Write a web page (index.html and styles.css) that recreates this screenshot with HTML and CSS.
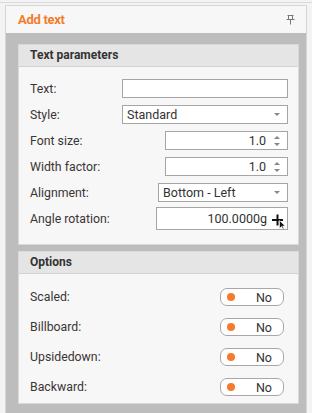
FILE: index.html
```html
<!DOCTYPE html>
<html lang="en">
<head>
    <meta charset="UTF-8">
    <title>Add text</title>
    <link rel="stylesheet" href="styles.css">
</head>
<body>
    <div class="frame">
        <div class="panel">
            <div class="panel__head">
                <span class="panel__title">Add text</span>
                <svg class="panel__pin" width="9" height="10" viewBox="0 0 9 10">
                    <path d="M1.5 0.5h6M2.5 0.5v4M6.5 0.5v4M0.5 4.5h8M4.5 4.5v5" stroke="#777" stroke-width="1" fill="none"/>
                </svg>
            </div>
            <div class="panel__body">
                <div class="group">
                    <div class="group__head">Text parameters</div>
                    <div class="group__body">
                        <div class="row">
                            <span class="row__label">Text:</span>
                            <div class="field field--text"></div>
                        </div>
                        <div class="row">
                            <span class="row__label">Style:</span>
                            <div class="field field--text field--select">
                                <span>Standard</span>
                                <span class="caret"></span>
                            </div>
                        </div>
                        <div class="row">
                            <span class="row__label">Font size:</span>
                            <div class="field field--num">
                                <span class="field__value">1.0</span>
                                <span class="spin"><i class="spin__up"></i><i class="spin__down"></i></span>
                            </div>
                        </div>
                        <div class="row">
                            <span class="row__label">Width factor:</span>
                            <div class="field field--num">
                                <span class="field__value">1.0</span>
                                <span class="spin"><i class="spin__up"></i><i class="spin__down"></i></span>
                            </div>
                        </div>
                        <div class="row">
                            <span class="row__label">Alignment:</span>
                            <div class="field field--align field--select">
                                <span>Bottom - Left</span>
                                <span class="caret"></span>
                            </div>
                        </div>
                        <div class="row">
                            <span class="row__label">Angle rotation:</span>
                            <div class="field field--angle">
                                <span class="field__value">100.0000g</span>
                                <svg class="cursor" width="16" height="16" viewBox="0 0 16 16">
                                    <path d="M1 7h11M6.5 1.5v11" stroke="#111" stroke-width="2" fill="none"/>
                                    <path d="M8.5 7.5v8l2-2 1.5 2.5 1-0.6-1.4-2.4h2.6z" fill="#111" stroke="#fff" stroke-width="0.6"/>
                                </svg>
                            </div>
                        </div>
                    </div>
                </div>
                <div class="group">
                    <div class="group__head">Options</div>
                    <div class="group__body group__body--options">
                        <div class="row row--opt">
                            <span class="row__label">Scaled:</span>
                            <div class="toggle"><span class="toggle__dot"></span>No</div>
                        </div>
                        <div class="row row--opt">
                            <span class="row__label">Billboard:</span>
                            <div class="toggle"><span class="toggle__dot"></span>No</div>
                        </div>
                        <div class="row row--opt">
                            <span class="row__label">Upsidedown:</span>
                            <div class="toggle"><span class="toggle__dot"></span>No</div>
                        </div>
                        <div class="row row--opt">
                            <span class="row__label">Backward:</span>
                            <div class="toggle"><span class="toggle__dot"></span>No</div>
                        </div>
                    </div>
                </div>
            </div>
        </div>
    </div>
</body>
</html>
```

FILE: styles.css
```css
* { box-sizing: border-box; }

html, body {
    margin: 0;
    padding: 0;
}

body {
    background: #f3f3f3;
    font-family: Roboto, "Liberation Sans", sans-serif;
    font-size: 12.3px;
    color: #3b3535;
    width: 312px;
    height: 413px;
    overflow: hidden;
}

.frame {
    margin-top: 2px;
    border-top: 1px solid #dadada;
    padding: 2px 5px 0 5px;
}

.panel {
    border: 1px solid #d6d6d6;
    border-bottom: none;
    background: #bdbdbd;
}

.panel__head {
    height: 27px;
    background: #f7f7f7;
    display: flex;
    align-items: center;
    justify-content: space-between;
    padding: 0 11px 0 12px;
}

.panel__title {
    color: #f47c2c;
    font-weight: bold;
    font-size: 13px;
    letter-spacing: -0.3px;
}

.panel__pin { margin-top: 1px; }

.panel__body {
    padding: 11px 7px 10px 12px;
    display: flex;
    flex-direction: column;
    gap: 6px;
}

.group {
    border: 1px solid #d9d9d9;
    background: #f7f7f7;
}

.group__head {
    height: 22px;
    background: #e5e5e5;
    border-bottom: 1px solid #d3d3d3;
    font-weight: bold;
    font-size: 12px;
    color: #333;
    padding: 3px 0 0 11px;
}

.group__body {
    padding: 12px 10px 16px 11px;
    display: flex;
    flex-direction: column;
    gap: 7px;
}

.group__body--options {
    padding: 14px 14px 7px 11px;
    gap: 12px;
}

.row {
    display: flex;
    align-items: center;
    justify-content: space-between;
    height: 19px;
}

.row--opt { height: 18px; }

.field {
    height: 19px;
    border: 1px solid #a5a5a5;
    background: #fff;
    display: flex;
    align-items: center;
    padding: 0 6px 0 4px;
    font-size: 12.5px;
    color: #333;
}

.field--text { width: 166px; }

.field--align { width: 130px; }

.field--select { justify-content: space-between; }

.field--num {
    width: 123px;
    justify-content: flex-end;
}

.field--angle {
    width: 132px;
    height: 23px;
    justify-content: flex-end;
    padding-right: 0;
}

.field__value { margin-right: 8px; }

.field--angle .field__value { margin-right: 4px; }

.cursor { margin-top: 4px; }

.caret {
    width: 0;
    height: 0;
    border-left: 3px solid transparent;
    border-right: 3px solid transparent;
    border-top: 3px solid #888;
    margin-right: 1px;
}

.spin {
    display: flex;
    flex-direction: column;
    gap: 4px;
    margin-right: 1px;
}

.spin i {
    display: block;
    width: 0;
    height: 0;
    border-left: 3px solid transparent;
    border-right: 3px solid transparent;
}

.spin__up { border-bottom: 3px solid #888; }

.spin__down { border-top: 3px solid #888; }

.toggle {
    width: 64px;
    height: 18px;
    border: 1px solid #a8a8a8;
    border-radius: 7px;
    background: #fff;
    display: flex;
    align-items: center;
    justify-content: space-between;
    padding: 0 11px 0 6px;
    font-size: 12.5px;
    color: #333;
}

.toggle__dot {
    width: 8px;
    height: 8px;
    border-radius: 50%;
    background: #f47c2c;
}
```
